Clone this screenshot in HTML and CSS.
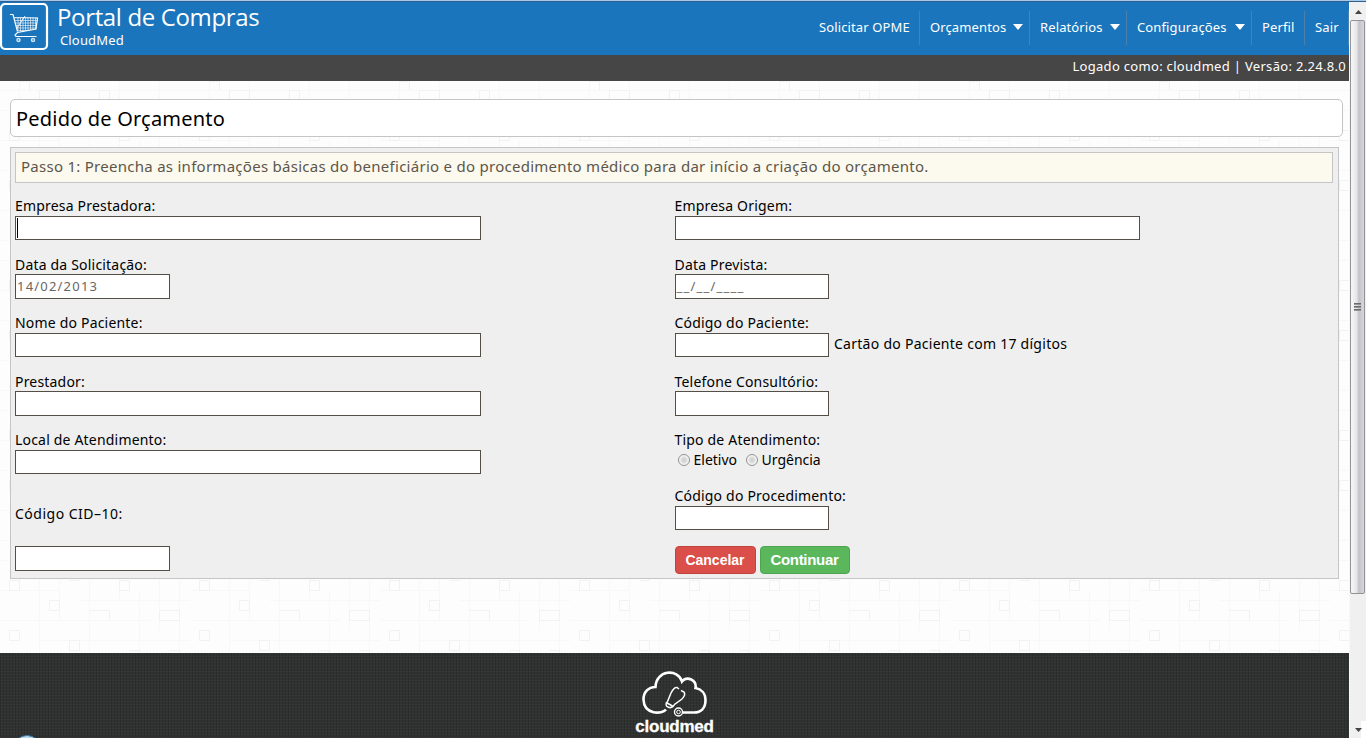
FILE: index.html
```
<!DOCTYPE html>
<html lang="pt-BR">
<head>
<meta charset="utf-8">
<title>Portal de Compras</title>
<link rel="stylesheet" href="styles.css">
</head>
<body>
<div class="page">
  <svg class="paper" width="1349" height="572" aria-hidden="true">
    <defs>
      <pattern id="tiles" width="190" height="150" patternUnits="userSpaceOnUse">
        <g fill="none" stroke="#f8f8f8">
          <path d="M0 9.500H190M0 29.500H110M130 39.500H190M0 59.500H60M80 69.500H190M0 89.500H150M40 109.500H190M0 129.500H90M120 139.500H190M19.500 0V60M39.500 40V150M59.500 0V90M89.500 20V120M119.500 0V70M139.500 60V150M159.500 0V100M179.500 50V150"/>
        </g>
        <g fill="none" stroke="#f2f2f2">
          <path d="M19.500 .5h10v9M39.500 9.500h20v10h-20zM99.500 9.500h10v10h-10zM149.500 19.500h20v10M69.500 29.500h10v20h-10M9.500 49.500h10v10h-10zM119.500 49.500h10v10h-10zM49.500 69.500h10v10h-10zM89.500 79.500h20v10M159.500 79.500h20v10h-20zM9.500 99.500h10v10h-10zM69.500 109.500h10v10h-10zM129.500 119.500h10v10M29.500 129.500h20v10h-20zM169.500 119.500h10v20"/>
        </g>
      </pattern>
    </defs>
    <rect width="1349" height="572" fill="url(#tiles)"/>
  </svg>
  <header class="header">
    <div class="brand">
      <svg class="cart" width="49" height="48" viewBox="0 0 49 48" fill="none" stroke="#fff">
        <rect x="1" y="1" width="46" height="45" rx="4" stroke-width="2.200"/>
        <path d="M10 11.500h3l4.500 17M14 14.500l23.500.5-1.500 11-18.500 3.500-2.500 2.500 1 1.500h20.500" stroke-width="1.200"/>
        <path d="M15 17.500h22M15.500 20h21.500M16 22.500h20.500M17 25h19.500M18 27.500h12M18 14.500v14M20.500 14.500v14M23 14.500v14M25.500 14.500v13M28 14.500v13M30.500 14.500v12.500M33 14.500v12M35.500 14.500v12" stroke-width=".6"/>
        <path d="M25 13l-8 12" stroke-width=".9"/>
        <circle cx="18.500" cy="37" r="1.500" stroke-width="1.500" stroke="#cfe3f3"/>
        <circle cx="33" cy="37" r="1.500" stroke-width="1.500" stroke="#cfe3f3"/>
      </svg>
      <div class="brand-text">
        <div class="brand-name">Portal de Compras</div>
        <div class="brand-sub">CloudMed</div>
      </div>
    </div>
    <nav class="nav">
      <a class="item opme">Solicitar OPME</a>
      <a class="item orc">Orçamentos<i class="caret"></i></a>
      <a class="item rel">Relatórios<i class="caret"></i></a>
      <a class="item conf">Configurações<i class="caret"></i></a>
      <a class="item perfil">Perfil</a>
      <a class="item sair">Sair</a>
    </nav>
  </header>
  <div class="status"><span>Logado como: cloudmed | Versão: 2.24.8.0</span></div>
  <main class="main">
    <h1 class="title"><span>Pedido de Orçamento</span></h1>
    <section class="panel">
      <p class="notice"><span>Passo 1: Preencha as informações básicas do beneficiário e do procedimento médico para dar início a criação do orçamento.</span></p>
      <form class="form">
        <div class="field"><label>Empresa Prestadora:</label><div class="input wide"><span class="cursor"></span></div></div>
        <div class="field right"><label>Empresa Origem:</label><div class="input wide"></div></div>
        <div class="field"><label>Data da Solicitação:</label><div class="input date">14/02/2013</div></div>
        <div class="field right"><label>Data Prevista:</label><div class="input date">__/__/____</div></div>
        <div class="field"><label>Nome do Paciente:</label><div class="input wide"></div></div>
        <div class="field right"><label>Código do Paciente:</label><div class="line"><div class="input"></div><span class="hint">Cartão do Paciente com 17 dígitos</span></div></div>
        <div class="field"><label>Prestador:</label><div class="input wide tall"></div></div>
        <div class="field right"><label>Telefone Consultório:</label><div class="input tall"></div></div>
        <div class="field"><label>Local de Atendimento:</label><div class="input wide"></div></div>
        <div class="field"><label>Tipo de Atendimento:</label><div class="radios"><i class="radio"></i><span class="eletivo">Eletivo</span><i class="radio"></i><span>Urgência</span></div></div>
        <div class="field cid"><label>Código CID–10:</label></div>
        <div class="field right"><label>Código do Procedimento:</label><div class="input"></div></div>
        <div class="field"><div class="input last"></div></div>
        <div class="buttons"><div class="btn cancel"><span>Cancelar</span></div><div class="btn go"><span>Continuar</span></div></div>
      </form>
    </section>
  </main>
  <footer class="footer">
    <svg class="cloud" width="68" height="50" viewBox="0 0 68 50" fill="none" stroke="#fff">
      <path d="M25 38.500C21 43.500 3 44 2.500 28.500C2.500 21 7.500 16 14.500 16C15 -1 37 -3 41 10.500C46 4.500 56 9 54.500 17C60 18 64.500 22 64.500 29C64.500 37 60 41.500 53 41.500H42" stroke-width="2.600"/>
      <circle cx="37.500" cy="41" r="4" stroke-width="1.400"/><circle cx="37.500" cy="41" r="1.800" stroke-width="1"/>
      <path d="M27 36C24.500 35 24.500 32 26.500 30.500L30 22Q33 16 36 16.500L38 18M40 19.500L43 21Q45 24 41 28L33.500 33.500Q31 38 27 36M26 32L31.500 35" stroke-width="1.500"/>
    </svg>
    <div class="footer-name">cloudmed</div>
  </footer>
  <div class="orb"></div>
</div>
<aside class="scrollbar">
  <div class="sb-top"><i class="up"></i></div>
  <div class="thumb"><i></i><i></i><i></i></div>
  <div class="sb-end"><i class="down"></i></div>
</aside>
<div class="topline"></div>
</body>
</html>
```
FILE: styles.css
```
* { box-sizing: border-box; }
body { margin: 0; width: 1366px; height: 738px; overflow: hidden; display: flex; background: #fdfdfd; font-family: "Noto Sans", "Open Sans", sans-serif; color: #000; }
.page { position: relative; width: 1349px; height: 738px; overflow: hidden; display: flex; flex-direction: column; flex: none; z-index: 0; }
.paper { position: absolute; top: 81px; left: 0; z-index: -1; }
.topline { position: absolute; top: 0; left: 0; width: 1366px; height: 2px; background: linear-gradient(#a9c9ea 50%, #2c6090 50%); }
.header { height: 55px; flex: none; background: #1b75bc; display: flex; justify-content: space-between; color: #fff; }
.brand { display: flex; padding-top: 3px; }
.brand-text { padding-left: 8px; white-space: nowrap; }
.brand-name { font: 24px/27px "Open Sans", sans-serif; letter-spacing: -.35px; }
.brand-sub { font: 13px/15px "Noto Sans", sans-serif; padding: 3px 0 0 3px; letter-spacing: .15px; }
.nav { display: flex; padding-top: 11px; height: 45px; font-size: 13px; line-height: 31px; letter-spacing: .12px; white-space: nowrap; }
.item { border-right: 1px solid #4b81ad; padding: 0 0 2px 10px; display: flex; align-items: center; justify-content: space-between; }
.opme { width: 111px; }
.orc { width: 110px; }
.rel { width: 97px; }
.conf { width: 125px; }
.perfil { width: 53px; }
.sair { width: 44px; }
.caret { width: 10px; height: 6px; margin-right: 6px; background: #fff; clip-path: polygon(0 0, 100% 0, 50% 100%); }
.status { height: 26px; flex: none; background: #464646; color: #fff; font-size: 13px; line-height: 23px; letter-spacing: .31px; text-align: right; padding-right: 3px; }
.main { height: 572px; flex: none; padding: 18px 6px 0 10px; }
.title { margin: 0; height: 38px; border: 1px solid #c3c5c9; border-radius: 5px; background: #fff; font-size: 20px; font-weight: 400; line-height: 37px; letter-spacing: .2px; padding-left: 5px; }
.panel { width: 1329px; height: 432px; margin-top: 10px; border: 1px solid #c3c5c9; background: #efefef; padding: 4px; }
.notice { margin: 0; width: 1318px; height: 31px; border: 1px solid #c5c5c5; background: #fcfaee; color: #5c564b; font-size: 15px; line-height: 27px; letter-spacing: .27px; padding-left: 5px; white-space: nowrap; }
.form { display: grid; margin: 15px 0 0; grid-template-columns: 659.500px 655px; grid-template-rows: 58.500px 58.500px 58.500px 58.500px 56px 57px 29px; }
.field label { display: block; height: 18px; font-size: 14px; line-height: 15px; letter-spacing: .19px; white-space: nowrap; }
.input { width: 155px; height: 24px; border: 1px solid #544f46; background: #fff; color: #6b665f; font-size: 13px; line-height: 23px; padding-left: 1px; }
.wide { width: 466px; }
.right .input { width: 154.500px; }
.right .wide { width: 465px; }
.date { height: 25px; margin-top: -.6px; letter-spacing: 1.200px; }
.tall { height: 25px; margin-top: -.6px; }
.last { height: 25px; margin-top: 1px; }
.cursor { display: block; width: 1px; height: 20px; margin-top: 1px; background: #000; }
.line { display: flex; }
.hint { font-size: 14px; line-height: 22px; letter-spacing: .27px; padding-left: 5px; white-space: nowrap; }
.radios { display: flex; align-items: center; height: 20px; padding-left: 3px; font-size: 14px; line-height: 20px; }
.radio { width: 12px; height: 12px; border: 1px solid #8f8f8f; border-radius: 50%; margin-right: 4px; background: radial-gradient(#d4d4d4 25%, #fff 75%); }
.eletivo { width: 52px; }
.cid { padding-top: 18px; }
.cid label { letter-spacing: .5px; }
.buttons { display: flex; gap: 4px; padding-top: 1px; }
.btn { height: 28px; border-radius: 4px; color: #fff; text-align: center; font: bold 14px/26px "Liberation Sans", sans-serif; }
.cancel { width: 81px; background: #da4f49; border: 1px solid #c2423c; }
.go { width: 90px; background: #5bb75b; border: 1px solid #4fa44f; font-size: 15px; letter-spacing: -.3px; }
.footer { height: 85px; flex: none; display: flex; flex-direction: column; align-items: center; padding-top: 18px; color: #fff; background: repeating-linear-gradient(90deg, #0002 0 1px, transparent 1px 3px), repeating-linear-gradient(0deg, #ffffff06 0 1px, transparent 1px 3px), #303232; }
.cloud { flex: none; }
.footer-name { font: bold 17px/20px "Liberation Sans", sans-serif; margin-top: -4px; letter-spacing: -.25px; -webkit-text-stroke: .3px #fff; }
.orb { position: absolute; left: 13px; top: 735px; width: 28px; height: 28px; border-radius: 50%; background: #b9d7ec; border: 1px solid #397aa8; }
.scrollbar { width: 17px; height: 738px; background: #f0f0f0; display: flex; flex-direction: column; border-left: 1px solid #f8f8f8; }
.sb-top { height: 20px; padding: 10px 0 0 5px; }
.up, .down { display: block; width: 7px; height: 4px; background: #444; clip-path: polygon(50% 0, 100% 100%, 0 100%); }
.thumb { width: 15px; height: 574px; border: 1px solid #929297; border-radius: 2px; background: linear-gradient(90deg, #f7f7f7, #e5e5e7 45%, #c2c3c9 60%, #d7d7dc); display: flex; flex-direction: column; align-items: center; justify-content: center; gap: 1px; }
.thumb i { width: 7px; height: 2px; background: linear-gradient(#555, #aaa); }
.sb-end { height: 144px; display: flex; align-items: flex-end; padding: 0 0 6px 5px; background: linear-gradient(#fff, #fff) right bottom / 5px 17px no-repeat; }
.down { transform: rotate(180deg); }
```
